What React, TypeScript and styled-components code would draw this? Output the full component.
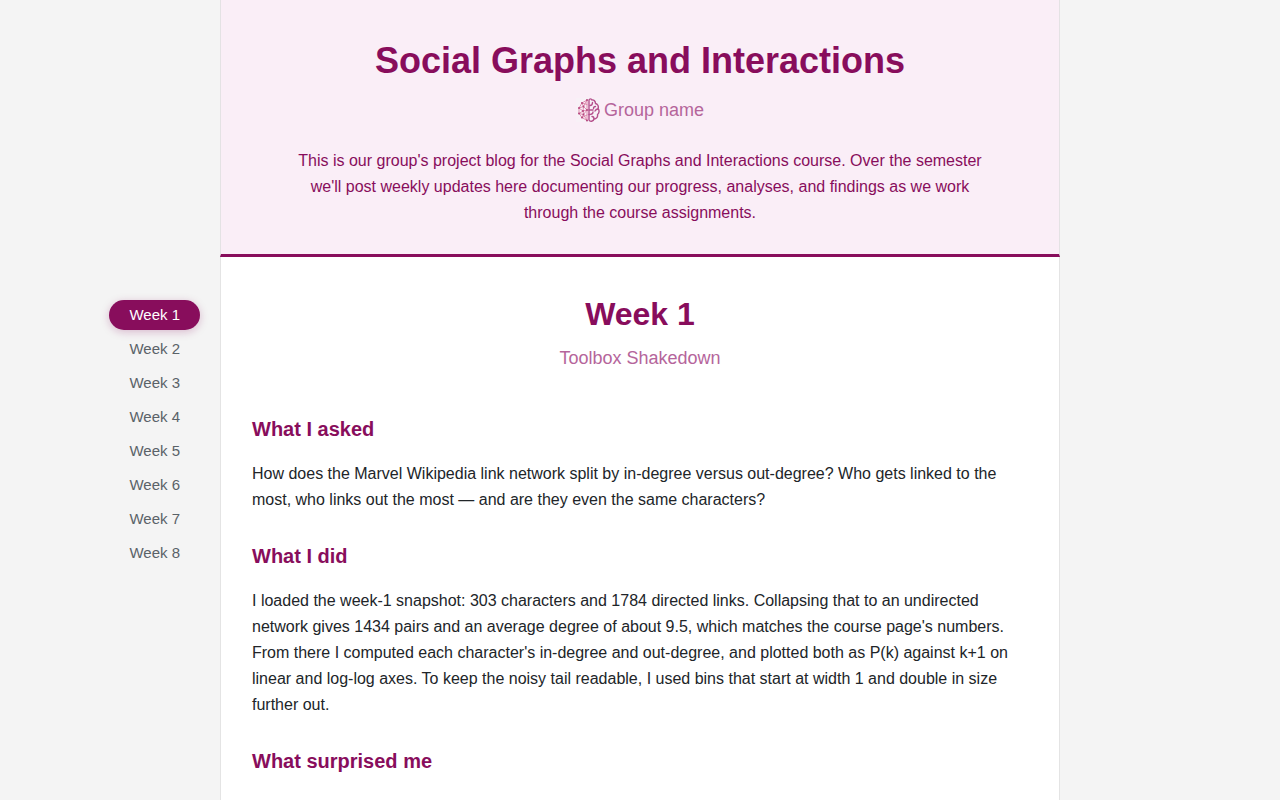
import React, { useState } from "react";
import styled, { createGlobalStyle } from "styled-components";

const plum = "#880d5c";
const orchid = "#b5659b";

const GlobalStyle = createGlobalStyle`
  * { box-sizing: border-box; }
  body {
    margin: 0;
    background: #f4f4f4;
    color: #212529;
    font-family: "Liberation Sans", Arial, sans-serif;
    font-size: 16px;
    line-height: 26px;
  }
  h1, h2, h3, p { margin: 0; }
`;

const Page = styled.div`
  display: grid;
  grid-template-columns: 1fr minmax(0, 840px) 1fr;
  min-height: 100vh;
`;

const WeekNav = styled.nav`
  position: sticky;
  top: 300px;
  align-self: start;
  justify-self: end;
  margin: 300px 20px 0 0;
  display: flex;
  flex-direction: column;
  gap: 4px;
`;

const WeekLink = styled.a<{ $active: boolean }>`
  padding: 0 20px;
  border-radius: 16px;
  font-size: 15px;
  line-height: 30px;
  text-decoration: none;
  white-space: nowrap;
  color: ${(p) => (p.$active ? "#ffffff" : "#5a6268")};
  background: ${(p) => (p.$active ? plum : "transparent")};
  box-shadow: ${(p) => (p.$active ? "0 2px 8px rgba(136, 13, 92, 0.25)" : "none")};
`;

const Column = styled.div`
  background: #ffffff;
`;

const Header = styled.header`
  padding: 37px 72px 28px;
  text-align: center;
  color: ${plum};
  background: #faeef7;
  border: 1px solid #e4e2e4;
  border-top: 0;
  border-bottom: 3px solid ${plum};
`;

const SiteTitle = styled.h1`
  font-size: 36px;
  line-height: 48px;
`;

const GroupName = styled.p`
  display: flex;
  align-items: center;
  justify-content: center;
  gap: 4px;
  margin: 11px 0 24px;
  font-size: 18px;
  line-height: 28px;
  color: ${orchid};
`;

const Main = styled.main`
  padding: 31px 31px 60px;
  border: 1px solid #e4e4e4;
  border-width: 0 1px;
`;

const WeekHeading = styled.header`
  margin-bottom: 41px;
  text-align: center;
`;

const WeekTitle = styled.h2`
  color: ${plum};
  font-size: 32px;
  line-height: 52px;
`;

const WeekSubtitle = styled.p`
  margin-top: 4px;
  font-size: 18px;
  line-height: 28px;
  color: ${orchid};
`;

const Section = styled.section`
  margin-bottom: 27px;
`;

const SectionTitle = styled.h3`
  margin-bottom: 16px;
  color: ${plum};
  font-size: 20px;
  line-height: 32px;
`;

const BrainIcon = () => (
  <svg width="24" height="24" viewBox="0 0 48 48" fill="none" strokeLinecap="round" strokeLinejoin="round" aria-hidden="true">
    <rect width="48" height="48" fill="#f8f1f7" />
    <g stroke="#b5508c" strokeWidth="2.8">
      <path d="M26 4v40c2 4 9 3 10-2 5 0 8-4 7-9 4-3 4-9 1-12 2-5-1-9-5-10 0-5-4-8-7-7-1-3-5-3-6 0" />
      <path d="M33 9c0 4-2 6-5 6M39 17c-3 0-4 2-4 4M26 24h8M44 22c-3 0-5 2-6 4M26 33c5 0 8-2 8-5M36 42c0-3-2-5-4-5" />
    </g>
    <path stroke="#d9779f" strokeWidth="1.6" d="M22 4 12 10 6 20v11l6 8 10 6V4l-7 13 7 7-7 9 7 12M12 10l3 7-9 3 8 6-8 5 9 2-3 6M15 17l-1 9 1 7M14 26l8-2M12 10l10 3M12 39l10-5" />
    <g fill="#b4487f">
      <circle cx="22" cy="4" r="2" />
      <circle cx="12" cy="10" r="2" />
      <circle cx="6" cy="20" r="2" />
      <circle cx="6" cy="31" r="2" />
      <circle cx="12" cy="39" r="2" />
      <circle cx="22" cy="45" r="2" />
      <circle cx="15" cy="17" r="2" />
      <circle cx="14" cy="26" r="2" />
      <circle cx="15" cy="33" r="2" />
      <circle cx="22" cy="24" r="2" />
    </g>
  </svg>
);

const weeks = [1, 2, 3, 4, 5, 6, 7, 8];

const sections = [
  {
    title: "What I asked",
    text: "How does the Marvel Wikipedia link network split by in-degree versus out-degree? Who gets linked to the most, who links out the most — and are they even the same characters?",
  },
  {
    title: "What I did",
    text: "I loaded the week-1 snapshot: 303 characters and 1784 directed links. Collapsing that to an undirected network gives 1434 pairs and an average degree of about 9.5, which matches the course page's numbers. From there I computed each character's in-degree and out-degree, and plotted both as P(k) against k+1 on linear and log-log axes. To keep the noisy tail readable, I used bins that start at width 1 and double in size further out.",
  },
  { title: "What surprised me", text: "" },
];

export default function App() {
  const [active, setActive] = useState(1);

  return (
    <>
      <GlobalStyle />
      <Page>
        <WeekNav aria-label="Weeks">
          {weeks.map((week) => (
            <WeekLink
              key={week}
              href={`#week-${week}`}
              $active={week === active}
              aria-current={week === active ? "true" : undefined}
              onClick={() => setActive(week)}
            >
              Week {week}
            </WeekLink>
          ))}
        </WeekNav>
        <Column>
          <Header>
            <SiteTitle>Social Graphs and Interactions</SiteTitle>
            <GroupName>
              <BrainIcon />
              Group name
            </GroupName>
            <p>
              This is our group's project blog for the Social Graphs and Interactions course. Over the
              semester we'll post weekly updates here documenting our progress, analyses, and findings as
              we work through the course assignments.
            </p>
          </Header>
          <Main id="week-1">
            <WeekHeading>
              <WeekTitle>Week 1</WeekTitle>
              <WeekSubtitle>Toolbox Shakedown</WeekSubtitle>
            </WeekHeading>
            {sections.map((section) => (
              <Section key={section.title}>
                <SectionTitle>{section.title}</SectionTitle>
                {section.text && <p>{section.text}</p>}
              </Section>
            ))}
          </Main>
        </Column>
      </Page>
    </>
  );
}
